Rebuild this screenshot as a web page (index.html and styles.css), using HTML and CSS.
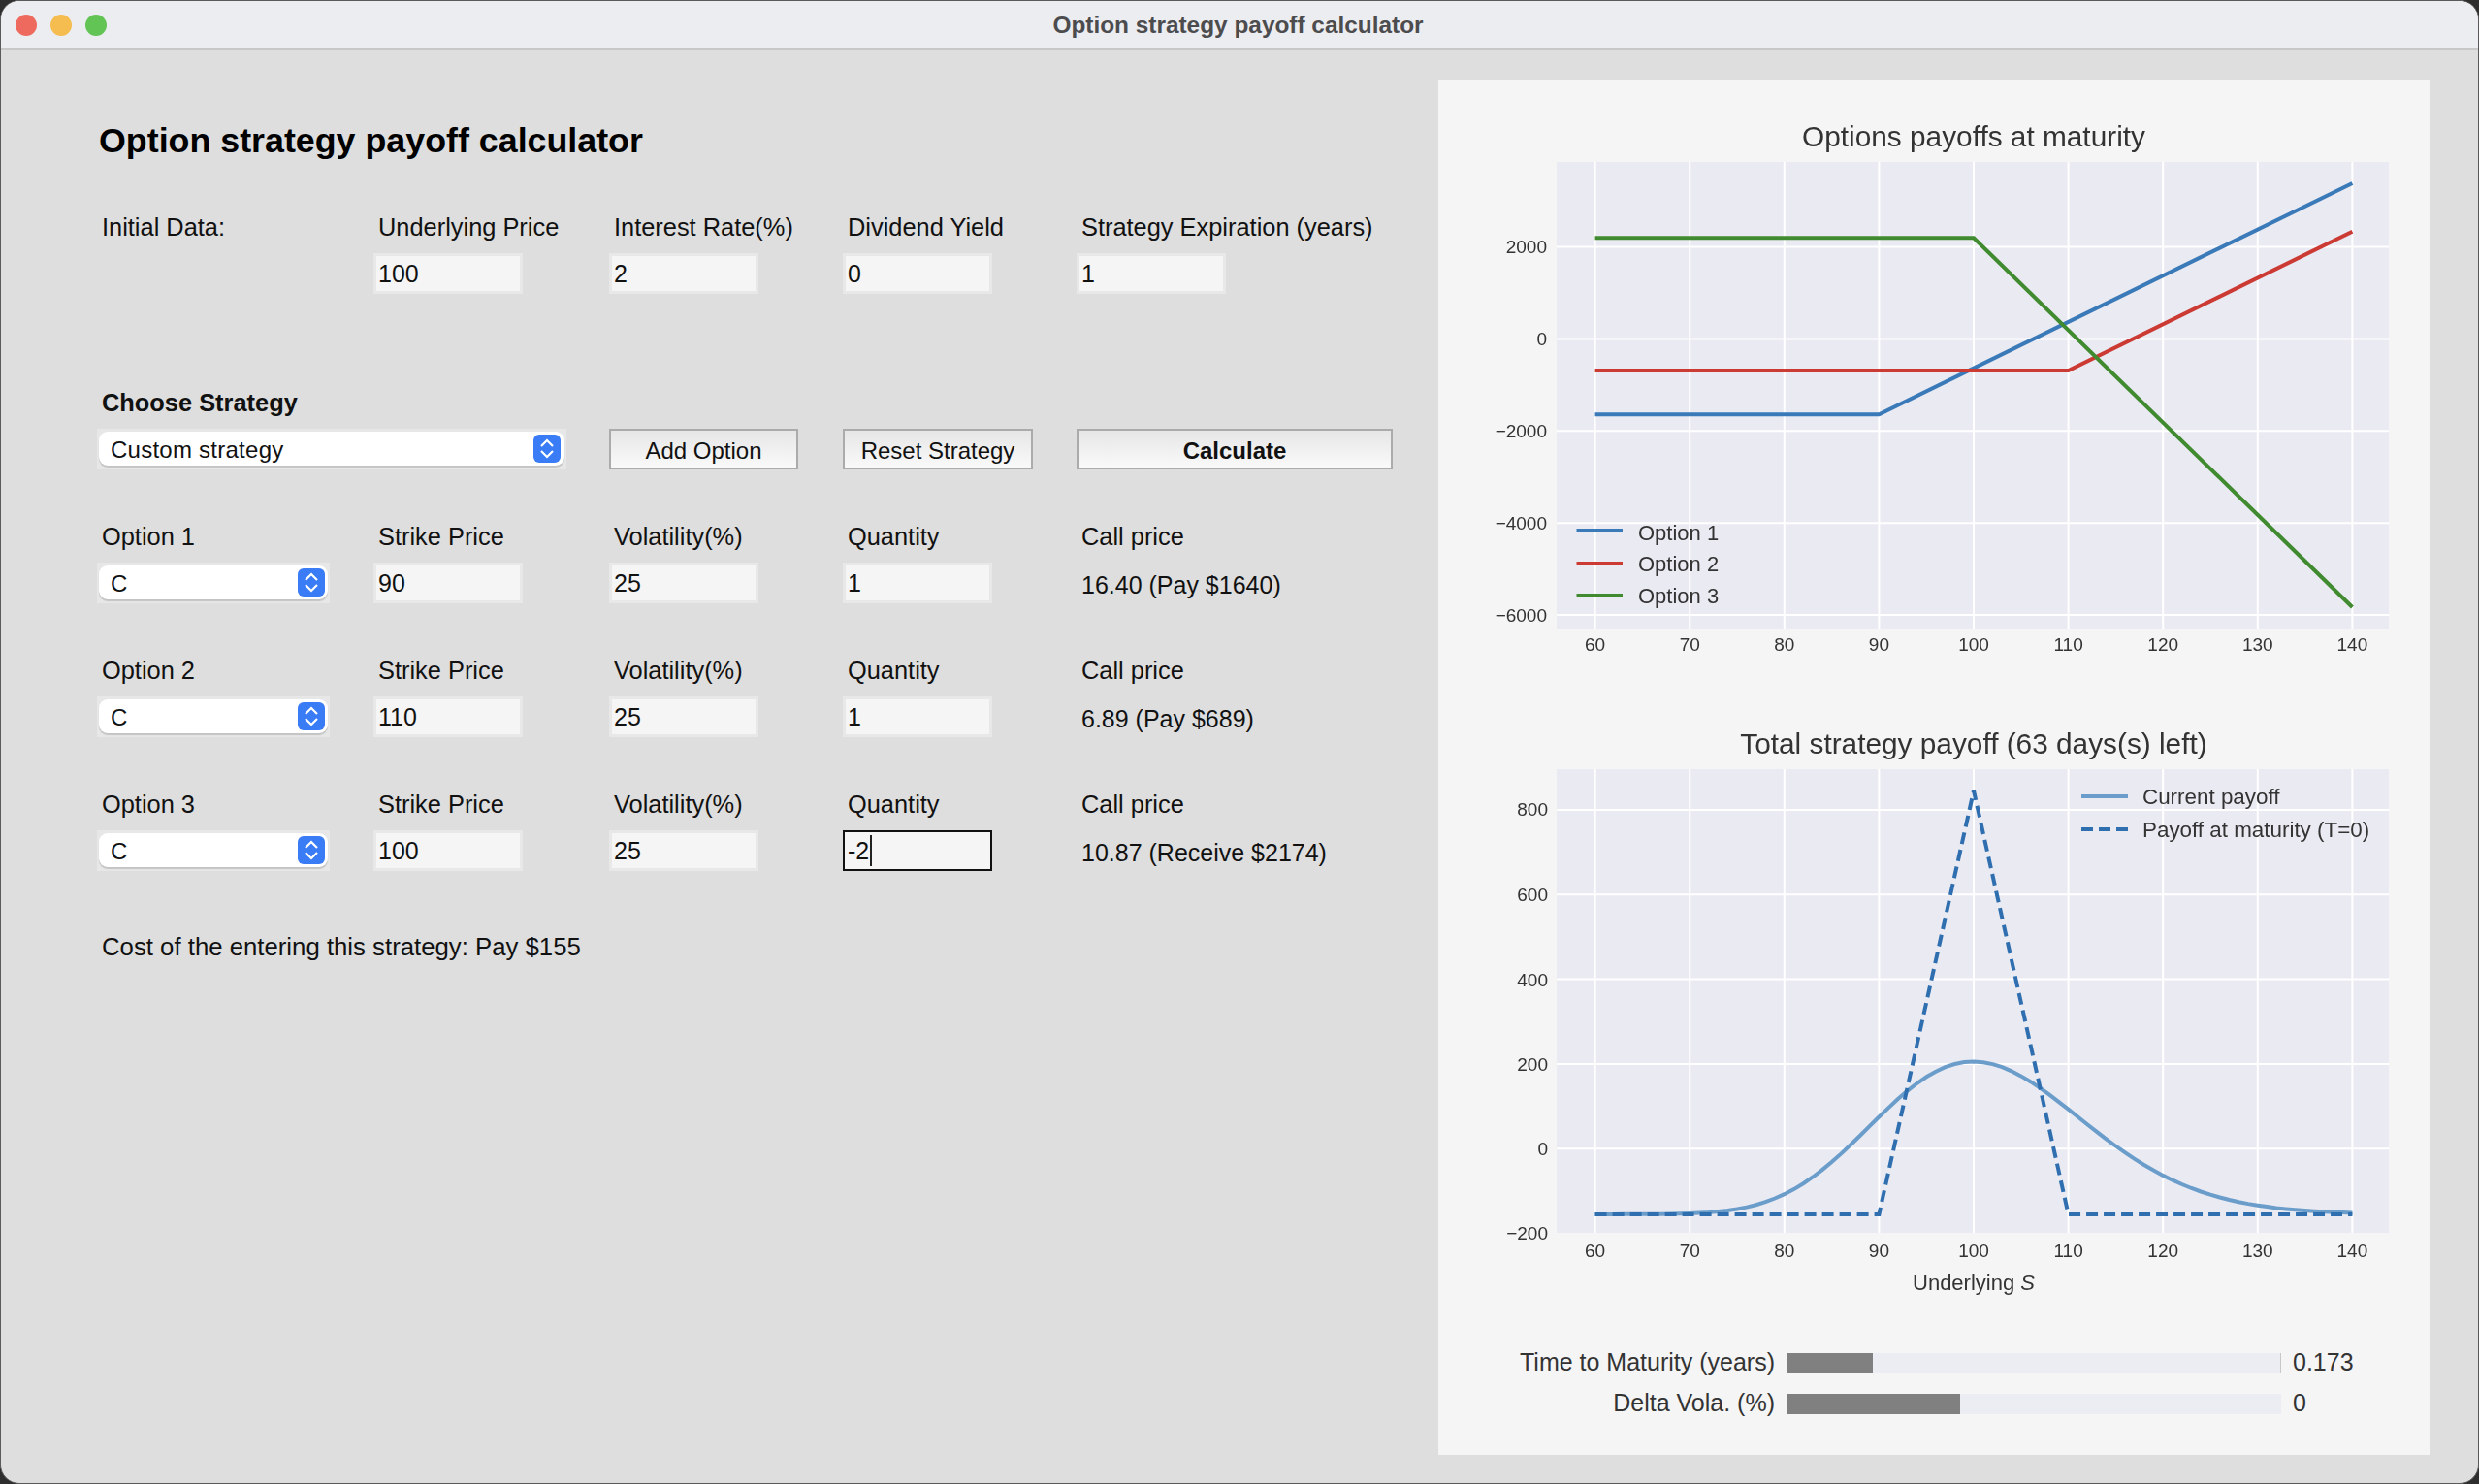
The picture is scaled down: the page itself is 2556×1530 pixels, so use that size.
FILE: index.html
```html
<!DOCTYPE html>
<html lang="en">
<head>
    <meta charset="UTF-8">
    <title>Option strategy payoff calculator</title>
    <link rel="stylesheet" href="styles.css">
</head>
<body>

<div class="window">
    <header class="titlebar">
        <span class="light light-red"></span>
        <span class="light light-yellow"></span>
        <span class="light light-green"></span>
        <span class="window-title">Option strategy payoff calculator</span>
    </header>

    <main class="content">
        <section class="form">
            <h1>Option strategy payoff calculator</h1>

            <div class="row">
                <label>Initial Data:</label>
                <label>Underlying Price</label>
                <label>Interest Rate(%)</label>
                <label>Dividend Yield</label>
                <label>Strategy Expiration (years)</label>
                <span></span>
                <div class="field">100</div>
                <div class="field">2</div>
                <div class="field">0</div>
                <div class="field">1</div>
            </div>

            <div class="row row-strategy">
                <label class="bold">Choose Strategy</label>
                <span></span><span></span><span></span><span></span>
                <div class="combo combo-wide">
                    <span>Custom strategy</span>
                    <svg class="stepper" viewBox="0 0 28 29"><rect width="28" height="29" rx="6"/><path d="M8 12l6-6 6 6M8 17l6 6 6-6"/></svg>
                </div>
                <button>Add Option</button>
                <button class="btn-reset">Reset Strategy</button>
                <button class="btn-calc">Calculate</button>
            </div>

            <div class="row row-option">
                <label>Option 1</label>
                <label>Strike Price</label>
                <label>Volatility(%)</label>
                <label>Quantity</label>
                <label>Call price</label>
                <div class="combo">
                    <span>C</span>
                    <svg class="stepper" viewBox="0 0 28 29"><rect width="28" height="29" rx="6"/><path d="M8 12l6-6 6 6M8 17l6 6 6-6"/></svg>
                </div>
                <div class="field">90</div>
                <div class="field">25</div>
                <div class="field">1</div>
                <div class="price">16.40 (Pay $1640)</div>
            </div>

            <div class="row row-option">
                <label>Option 2</label>
                <label>Strike Price</label>
                <label>Volatility(%)</label>
                <label>Quantity</label>
                <label>Call price</label>
                <div class="combo">
                    <span>C</span>
                    <svg class="stepper" viewBox="0 0 28 29"><rect width="28" height="29" rx="6"/><path d="M8 12l6-6 6 6M8 17l6 6 6-6"/></svg>
                </div>
                <div class="field">110</div>
                <div class="field">25</div>
                <div class="field">1</div>
                <div class="price">6.89 (Pay $689)</div>
            </div>

            <div class="row row-option">
                <label>Option 3</label>
                <label>Strike Price</label>
                <label>Volatility(%)</label>
                <label>Quantity</label>
                <label>Call price</label>
                <div class="combo">
                    <span>C</span>
                    <svg class="stepper" viewBox="0 0 28 29"><rect width="28" height="29" rx="6"/><path d="M8 12l6-6 6 6M8 17l6 6 6-6"/></svg>
                </div>
                <div class="field">100</div>
                <div class="field">25</div>
                <div class="field field-focus">-2<i class="caret"></i></div>
                <div class="price">10.87 (Receive $2174)</div>
            </div>

            <p class="cost">Cost of the entering this strategy: Pay $155</p>
        </section>

        <section class="panel">
            <!-- viewBox uses window coordinates so the axes are easy to check -->
            <svg class="chart chart-top" viewBox="1483 82 1022 618">
                <text class="chart-title" x="2035" y="151">Options payoffs at maturity</text>
                <rect class="axes" x="1605" y="167" width="858" height="481"/>
                <path class="grid" d="M1644.600 167V648M1742.200 167V648M1839.800 167V648M1937.400 167V648M2035 167V648M2132.600 167V648M2230.200 167V648M2327.800 167V648M2425.400 167V648"/>
                <path class="grid" d="M1605 254.500H2463M1605 349.400H2463M1605 444.300H2463M1605 539.200H2463M1605 634.100H2463"/>
                <polyline class="line line-blue" points="1644.600,427.200 1937.400,427.200 2425.400,189"/>
                <polyline class="line line-red" points="1644.600,382.100 2132.600,382.100 2425.400,238.700"/>
                <polyline class="line line-green" points="1644.600,245.200 2035,245.200 2425.400,626"/>
                <g class="ytick">
                    <text x="1595" y="261">2000</text>
                    <text x="1595" y="356">0</text>
                    <text x="1595" y="451">−2000</text>
                    <text x="1595" y="546">−4000</text>
                    <text x="1595" y="641">−6000</text>
                </g>
                <g class="xtick">
                    <text x="1644.600" y="671">60</text>
                    <text x="1742.200" y="671">70</text>
                    <text x="1839.800" y="671">80</text>
                    <text x="1937.400" y="671">90</text>
                    <text x="2035" y="671">100</text>
                    <text x="2132.600" y="671">110</text>
                    <text x="2230.200" y="671">120</text>
                    <text x="2327.800" y="671">130</text>
                    <text x="2425.400" y="671">140</text>
                </g>
                <path class="line line-blue" d="M1625.500 547H1673"/>
                <path class="line line-red" d="M1625.500 581H1673"/>
                <path class="line line-green" d="M1625.500 614H1673"/>
                <text class="legend" x="1689" y="557">Option 1</text>
                <text class="legend" x="1689" y="589">Option 2</text>
                <text class="legend" x="1689" y="622">Option 3</text>
            </svg>

            <svg class="chart chart-bottom" viewBox="1483 730 1022 610">
                <text class="chart-title" x="2035" y="777">Total strategy payoff (63 days(s) left)</text>
                <rect class="axes" x="1605" y="793" width="858" height="478"/>
                <path class="grid" d="M1644.600 793V1271M1742.200 793V1271M1839.800 793V1271M1937.400 793V1271M2035 793V1271M2132.600 793V1271M2230.200 793V1271M2327.800 793V1271M2425.400 793V1271"/>
                <path class="grid" d="M1605 834.900H2463M1605 922.200H2463M1605 1009.600H2463M1605 1096.900H2463M1605 1184.200H2463"/>
                <path id="current-payoff" class="line line-soft"/>
                <polyline class="line line-dash" points="1644.600,1251.900 1937.400,1251.900 2035,815.300 2132.600,1251.900 2425.400,1251.900"/>
                <g class="ytick">
                    <text x="1596" y="841">800</text>
                    <text x="1596" y="929">600</text>
                    <text x="1596" y="1017">400</text>
                    <text x="1596" y="1104">200</text>
                    <text x="1596" y="1191">0</text>
                    <text x="1596" y="1278">−200</text>
                </g>
                <g class="xtick">
                    <text x="1644.600" y="1296">60</text>
                    <text x="1742.200" y="1296">70</text>
                    <text x="1839.800" y="1296">80</text>
                    <text x="1937.400" y="1296">90</text>
                    <text x="2035" y="1296">100</text>
                    <text x="2132.600" y="1296">110</text>
                    <text x="2230.200" y="1296">120</text>
                    <text x="2327.800" y="1296">130</text>
                    <text x="2425.400" y="1296">140</text>
                </g>
                <text class="axis-label" x="2035" y="1330">Underlying <tspan class="math">S</tspan></text>
                <path class="line line-soft" d="M2146 821H2194"/>
                <path class="line line-dash" d="M2146 855H2194"/>
                <text class="legend legend-wide" x="2209" y="829">Current payoff</text>
                <text class="legend legend-wide" x="2209" y="863">Payoff at maturity (T=0)</text>
            </svg>

            <div class="sliders">
                <div class="slider">
                    <span class="slider-label">Time to Maturity (years)</span>
                    <div class="track track-end"><div class="fill" style="width: 17.500%"></div></div>
                    <span class="slider-value">0.173</span>
                </div>
                <div class="slider">
                    <span class="slider-label">Delta Vola. (%)</span>
                    <div class="track"><div class="fill" style="width: 35%"></div></div>
                    <span class="slider-value">0</span>
                </div>
            </div>
        </section>
    </main>
</div>

<script src="script.js"></script>
</body>
</html>
```

FILE: styles.css
```css
* {
    box-sizing: border-box;
}

html, body {
    margin: 0;
    height: 100%;
}

body {
    background: #2e2e2e;
    font-family: "Liberation Sans", Arial, sans-serif;
    color: #111;
    overflow: hidden;
}

.window {
    width: 2556px;
    height: 1530px;
    background: #dedede;
    border-radius: 20px;
    overflow: hidden;
    border: 1px solid #5a5a5a;
}

.titlebar {
    position: relative;
    height: 51px;
    display: flex;
    align-items: center;
    gap: 14px;
    padding-left: 15px;
    background: #ecedf1;
    border-bottom: 2px solid #c8c8c8;
}

.light {
    width: 22px;
    height: 22px;
    border-radius: 50%;
}

.light-red { background: #ee6a5f; }
.light-yellow { background: #f5bd4f; }
.light-green { background: #61c454; }

.window-title {
    position: absolute;
    left: 0;
    right: 3px;
    text-align: center;
    font-size: 24.400px;
    font-weight: 700;
    color: #4c4c4e;
}

.content {
    display: flex;
}

.form {
    width: 1482px;
    padding: 71px 0 0 99px;
}

h1 {
    margin: 0 0 52px 2px;
    font-size: 35.800px;
    line-height: 44px;
    font-weight: 700;
    color: #000;
}

.row {
    display: grid;
    grid-template-columns: 285px 243px 241px 241px 326px;
    grid-template-rows: 30px 42px;
    row-gap: 12px;
    font-size: 25.400px;
}

.row label {
    padding-left: 5px;
    line-height: 30px;
    white-space: nowrap;
}

.row label.bold {
    font-weight: 700;
}

.row-strategy {
    margin-top: 97px;
}

.row-option {
    margin-top: 54px;
}

.field {
    width: 154px;
    height: 42px;
    padding: 0 0 0 2px;
    border: 3px solid #e8e8e8;
    background: #f5f5f5;
    font-size: 25px;
    line-height: 36px;
}

.field-focus {
    border: 2px solid #111;
    padding-left: 3px;
    line-height: 38px;
}

.caret {
    display: inline-block;
    width: 2px;
    height: 32px;
    margin-left: 1px;
    vertical-align: -7px;
    background: #222;
}

.combo {
    width: 240px;
    height: 42px;
    padding: 3px 5px 0 14px;
    display: flex;
    align-items: flex-start;
    justify-content: space-between;
    background: #e7e7e7;
    font-size: 24px;
    position: relative;
}

.combo::before {
    content: "";
    position: absolute;
    left: 2px;
    right: 2px;
    top: 3px;
    height: 35px;
    border-radius: 9px;
    background: #fff;
    box-shadow: 0 2px 1px #c4c4c4;
}

.combo span {
    position: relative;
    padding-top: 1px;
    line-height: 36px;
    letter-spacing: 0.250px;
}

.combo-wide {
    grid-column: span 2;
    width: 484px;
    padding-right: 6px;
}

.stepper {
    position: relative;
    width: 28px;
    height: 29px;
    margin-top: 3px;
}

.stepper rect {
    fill: #3a7cf6;
}

.stepper path {
    fill: none;
    stroke: #fff;
    stroke-width: 2.200;
}

button {
    width: 195px;
    height: 42px;
    padding: 4px 0 0;
    border: 2px solid #ababab;
    background: linear-gradient(#e6e6e6, #f9f9f9);
    font-family: inherit;
    font-size: 24px;
    color: #111;
}

.btn-reset {
    width: 196px;
}

.btn-calc {
    width: 326px;
    font-weight: 700;
}

.price {
    padding: 8px 0 0 5px;
    font-size: 25px;
    line-height: 30px;
    white-space: nowrap;
}

.cost {
    margin: 63px 0 0;
    padding-left: 5px;
    font-size: 25.750px;
    line-height: 30px;
}

.panel {
    width: 1022px;
    height: 1418px;
    margin-top: 30px;
    background: #f5f5f5;
    display: flex;
    flex-direction: column;
}

.chart {
    display: block;
    width: 1022px;
    filter: blur(0.5px);
}

.chart-top { height: 618px; margin-bottom: 30px; }
.chart-bottom { height: 610px; }

.chart text {
    font-family: "Liberation Sans", Arial, sans-serif;
    fill: #333;
}

.chart-title {
    font-size: 29.800px;
    text-anchor: middle;
}

.axes {
    fill: #eaeaf2;
}

.grid {
    fill: none;
    stroke: #fff;
    stroke-width: 2;
}

.ytick { font-size: 19px; text-anchor: end; }
.xtick { font-size: 19px; text-anchor: middle; }
.legend { font-size: 22px; }
.legend-wide { font-size: 22.400px; }

.axis-label {
    font-size: 22px;
    text-anchor: middle;
}

.math {
    font-style: italic;
}

.line {
    fill: none;
    stroke-width: 4;
}

.line-blue { stroke: #3a7ab8; }
.line-red { stroke: #cc3a34; }
.line-green { stroke: #408a30; }
.line-soft { stroke: #6b9dcb; }
.line-dash { stroke: #2f6fb0; stroke-dasharray: 12 6; }

.sliders {
    padding-top: 55px;
    display: flex;
    flex-direction: column;
    gap: 21px;
}

.slider {
    display: grid;
    grid-template-columns: 347px 510px auto;
    column-gap: 12px;
    height: 21px;
    font-size: 25px;
    line-height: 18px;
    color: #333;
}

.slider-label {
    text-align: right;
    white-space: nowrap;
}

.track {
    background: #ececf3;
    height: 21px;
}

.track-end {
    border-right: 1px solid #c8c8c8;
}

.fill {
    height: 100%;
    background: #808080;
}
```

FILE: script.js
```js
// the current payoff curve is a Black-Scholes value, the rest of the chart is static
function normCdf(x) {
    var t = 1 / (1 + 0.2316419 * Math.abs(x));
    var d = 0.3989423 * Math.exp(-x * x / 2);
    var p = d * t * (0.3193815 + t * (-0.3565638 + t * (1.781478 + t * (-1.821256 + t * 1.330274))));
    return x > 0 ? 1 - p : p;
}

function callPrice(s, k, t, r, vol) {
    var d1 = (Math.log(s / k) + (r + vol * vol / 2) * t) / (vol * Math.sqrt(t));
    var d2 = d1 - vol * Math.sqrt(t);
    return s * normCdf(d1) - k * Math.exp(-r * t) * normCdf(d2);
}

var points = [];
for (var s = 60; s <= 140; s++) {
    var value = callPrice(s, 90, 0.168, 0.02, 0.25)
        + callPrice(s, 110, 0.168, 0.02, 0.25)
        - 2 * callPrice(s, 100, 0.168, 0.02, 0.25);
    var x = 2035 + (s - 100) * 9.76;
    var y = 1184.2 - (value * 100 - 155) * 0.4366;
    points.push(x.toFixed(1) + " " + y.toFixed(1));
}

document.getElementById("current-payoff").setAttribute("d", "M" + points.join("L"));
```
